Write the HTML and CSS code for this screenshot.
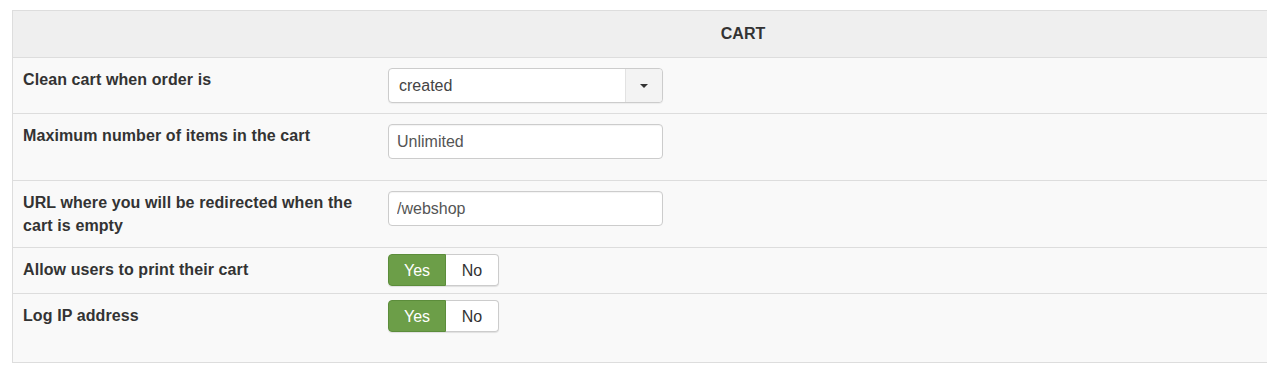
FILE: index.html
```html
<!DOCTYPE html>
<html lang="en">
<head>
    <meta charset="UTF-8">
    <title>Cart settings</title>
    <link rel="stylesheet" href="styles.css">
</head>
<body>
    <div class="panel">
        <div class="panel-head">CART</div>

        <div class="row">
            <div class="label">Clean cart when order is</div>
            <div class="control">
                <div class="select">
                    <span class="select-value">created</span>
                    <span class="select-btn"><span class="caret"></span></span>
                </div>
            </div>
        </div>

        <div class="row">
            <div class="label">Maximum number of items in the cart</div>
            <div class="control">
                <input class="text-input" type="text" value="Unlimited">
            </div>
        </div>

        <div class="row">
            <div class="label">URL where you will be redirected when the cart is empty</div>
            <div class="control">
                <input class="text-input" type="text" value="/webshop">
            </div>
        </div>

        <div class="row">
            <div class="label">Allow users to print their cart</div>
            <div class="control">
                <div class="toggle">
                    <span class="toggle-btn active">Yes</span>
                    <span class="toggle-btn">No</span>
                </div>
            </div>
        </div>

        <div class="row last">
            <div class="label">Log IP address</div>
            <div class="control">
                <div class="toggle">
                    <span class="toggle-btn active">Yes</span>
                    <span class="toggle-btn">No</span>
                </div>
            </div>
        </div>
    </div>
</body>
</html>
```

FILE: styles.css
```css
body {
    margin: 10px 0 0 12px;
    font-family: "Liberation Sans", Arial, sans-serif;
    font-size: 16px;
    line-height: 23px;
    color: #333;
    background-color: #fff;
    overflow: hidden;
}

.panel {
    width: 1460px;
    border: 1px solid #ddd;
    background-color: #f9f9f9;
}

.panel-head {
    background-color: #efefef;
    padding: 11px 12px 12px;
    text-align: center;
    font-weight: bold;
}

.row {
    display: grid;
    grid-template-columns: 363px 1fr;
    border-top: 1px solid #ddd;
}

.row.last {
    padding-bottom: 23px;
}

.label {
    padding: 10px 20px 10px 10px;
    font-weight: bold;
    letter-spacing: 0.1px;
}

.control {
    padding: 10px 12px;
}

.select {
    display: flex;
    width: 273px;
    height: 33px;
    border: 1px solid #ccc;
    border-radius: 4px;
    background-color: #fff;
    box-shadow: 0 1px 1px rgba(0, 0, 0, 0.05);
}

.select-value {
    flex: 1;
    padding: 5px 10px 0;
    color: #444;
}

.select-btn {
    width: 36px;
    display: flex;
    align-items: center;
    justify-content: center;
    background-color: #f3f3f3;
    border-left: 1px solid #e2e2e2;
    border-radius: 0 4px 4px 0;
}

.caret {
    width: 0;
    height: 0;
    border-left: 4px solid transparent;
    border-right: 4px solid transparent;
    border-top: 4px solid #333;
}

.text-input {
    display: block;
    box-sizing: border-box;
    width: 275px;
    height: 35px;
    margin: 0 0 11px;
    padding: 4px 8px;
    border: 1px solid #ccc;
    border-radius: 4px;
    background-color: #fff;
    font-family: inherit;
    font-size: 16px;
    color: #555;
    box-shadow: inset 0 1px 1px rgba(0, 0, 0, 0.05);
}

.toggle {
    display: inline-flex;
    margin: -4px 0 -3px;
    height: 32px;
    border-radius: 4px;
    box-shadow: 0 1px 1px rgba(0, 0, 0, 0.1);
}

.toggle-btn {
    box-sizing: border-box;
    display: flex;
    align-items: center;
    justify-content: center;
    width: 53px;
    border: 1px solid #ccc;
    border-left: none;
    background-color: #fff;
    color: #333;
}

.toggle-btn:last-child {
    border-radius: 0 4px 4px 0;
}

.toggle-btn.active {
    width: 58px;
    border: 1px solid #5c8d3b;
    border-radius: 4px 0 0 4px;
    background-color: #6c9e48;
    color: #fff;
}
```
